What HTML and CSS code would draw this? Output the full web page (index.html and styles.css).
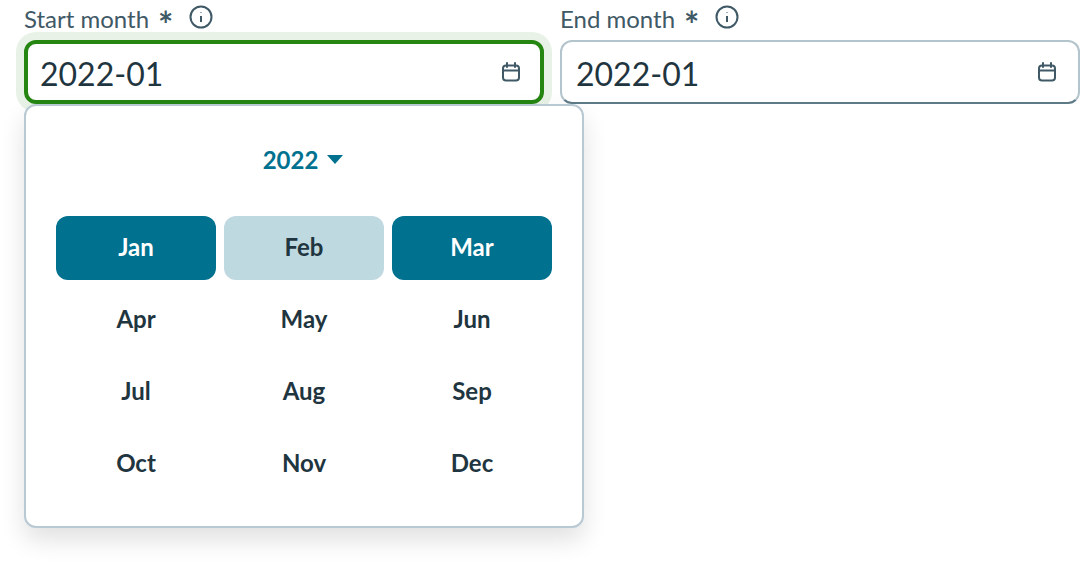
FILE: index.html
```html
<!DOCTYPE html>
<html lang="en">
<head>
    <meta charset="UTF-8">
    <title>Month range</title>
    <link rel="stylesheet" href="styles.css">
</head>
<body>
    <div class="range">
        <div class="field">
            <div class="field-label">
                <span>Start month</span>
                <span class="required">*</span>
                <svg class="info-icon" viewBox="0 0 24 24"><circle cx="12" cy="12" r="10.5"/><path d="M12 11v6M12 7v.6"/></svg>
            </div>
            <div class="input-box focused">
                <span class="input-value">2022-01</span>
                <svg class="calendar-icon" viewBox="0 0 20 20"><rect x="2" y="3.5" width="16" height="15" rx="3"/><path d="M2 8.5h16M6 1v4M14 1v4"/></svg>
            </div>
            <div class="picker">
                <div class="picker-year">
                    <span>2022</span>
                    <span class="caret"></span>
                </div>
                <div class="month-grid">
                    <div class="month selected">Jan</div>
                    <div class="month hovered">Feb</div>
                    <div class="month selected">Mar</div>
                    <div class="month">Apr</div>
                    <div class="month">May</div>
                    <div class="month">Jun</div>
                    <div class="month">Jul</div>
                    <div class="month">Aug</div>
                    <div class="month">Sep</div>
                    <div class="month">Oct</div>
                    <div class="month">Nov</div>
                    <div class="month">Dec</div>
                </div>
            </div>
        </div>
        <div class="field">
            <div class="field-label">
                <span>End month</span>
                <span class="required">*</span>
                <svg class="info-icon" viewBox="0 0 24 24"><circle cx="12" cy="12" r="10.5"/><path d="M12 11v6M12 7v.6"/></svg>
            </div>
            <div class="input-box">
                <span class="input-value">2022-01</span>
                <svg class="calendar-icon" viewBox="0 0 20 20"><rect x="2" y="3.5" width="16" height="15" rx="3"/><path d="M2 8.5h16M6 1v4M14 1v4"/></svg>
            </div>
        </div>
    </div>
</body>
</html>
```

FILE: styles.css
```css
body {
    margin: 0;
    min-height: 568px;
    background: #fff;
    font-family: Lato, "Liberation Sans", sans-serif;
    color: #1f3540;
}

.range {
    display: grid;
    grid-template-columns: 520px 520px;
    gap: 16px;
    padding-left: 24px;
}

.field {
    position: relative;
}

.field-label {
    display: flex;
    align-items: center;
    height: 40px;
    padding-bottom: 4px;
    box-sizing: border-box;
    font-size: 24px;
    color: #3f5966;
}

.required {
    margin-left: 9px;
    font-size: 36px;
    font-weight: 700;
    line-height: 40px;
    height: 40px;
    padding-top: 6px;
    box-sizing: border-box;
}

.info-icon {
    width: 24px;
    height: 24px;
    margin-left: 16px;
    margin-bottom: 2px;
    fill: none;
    stroke: #3f5966;
    stroke-width: 2;
}

.input-box {
    display: flex;
    align-items: center;
    justify-content: space-between;
    box-sizing: border-box;
    height: 64px;
    padding: 0 21px 0 14px;
    background: #fff;
    border: 2px solid #b4c4cd;
    border-bottom-color: #5f7a87;
    border-radius: 12px;
}

.input-box.focused {
    padding: 0 19px 0 12px;
    border: 4px solid #258612;
    box-shadow: 0 0 0 8px #e9f2e7;
}

.input-value {
    padding-top: 2px;
    font-size: 32px;
}

.calendar-icon {
    width: 20px;
    height: 20px;
    fill: none;
    stroke: #3f5966;
    stroke-width: 2;
    stroke-linecap: round;
}

.picker {
    position: absolute;
    top: 104px;
    left: 0;
    box-sizing: border-box;
    width: 560px;
    height: 424px;
    padding: 30px;
    background: #fff;
    border: 2px solid #b8c9d3;
    border-radius: 12px;
    box-shadow: 0 12px 24px rgba(0, 0, 0, 0.12);
}

.picker-year {
    display: flex;
    align-items: center;
    justify-content: center;
    gap: 9px;
    height: 48px;
    padding-right: 2px;
    padding-bottom: 2px;
    box-sizing: border-box;
    margin-bottom: 32px;
    font-size: 24px;
    font-weight: 700;
    color: #00718f;
}

.caret {
    width: 0;
    height: 0;
    border-left: 8px solid transparent;
    border-right: 8px solid transparent;
    border-top: 9px solid #00718f;
}

.month-grid {
    display: grid;
    grid-template-columns: repeat(3, 160px);
    grid-auto-rows: 64px;
    gap: 8px;
}

.month {
    display: flex;
    align-items: center;
    justify-content: center;
    padding-bottom: 4px;
    box-sizing: border-box;
    border-radius: 12px;
    font-size: 24px;
    font-weight: 700;
}

.month.selected {
    background: #00718f;
    color: #fff;
}

.month.hovered {
    background: #bfd9e1;
}
```
